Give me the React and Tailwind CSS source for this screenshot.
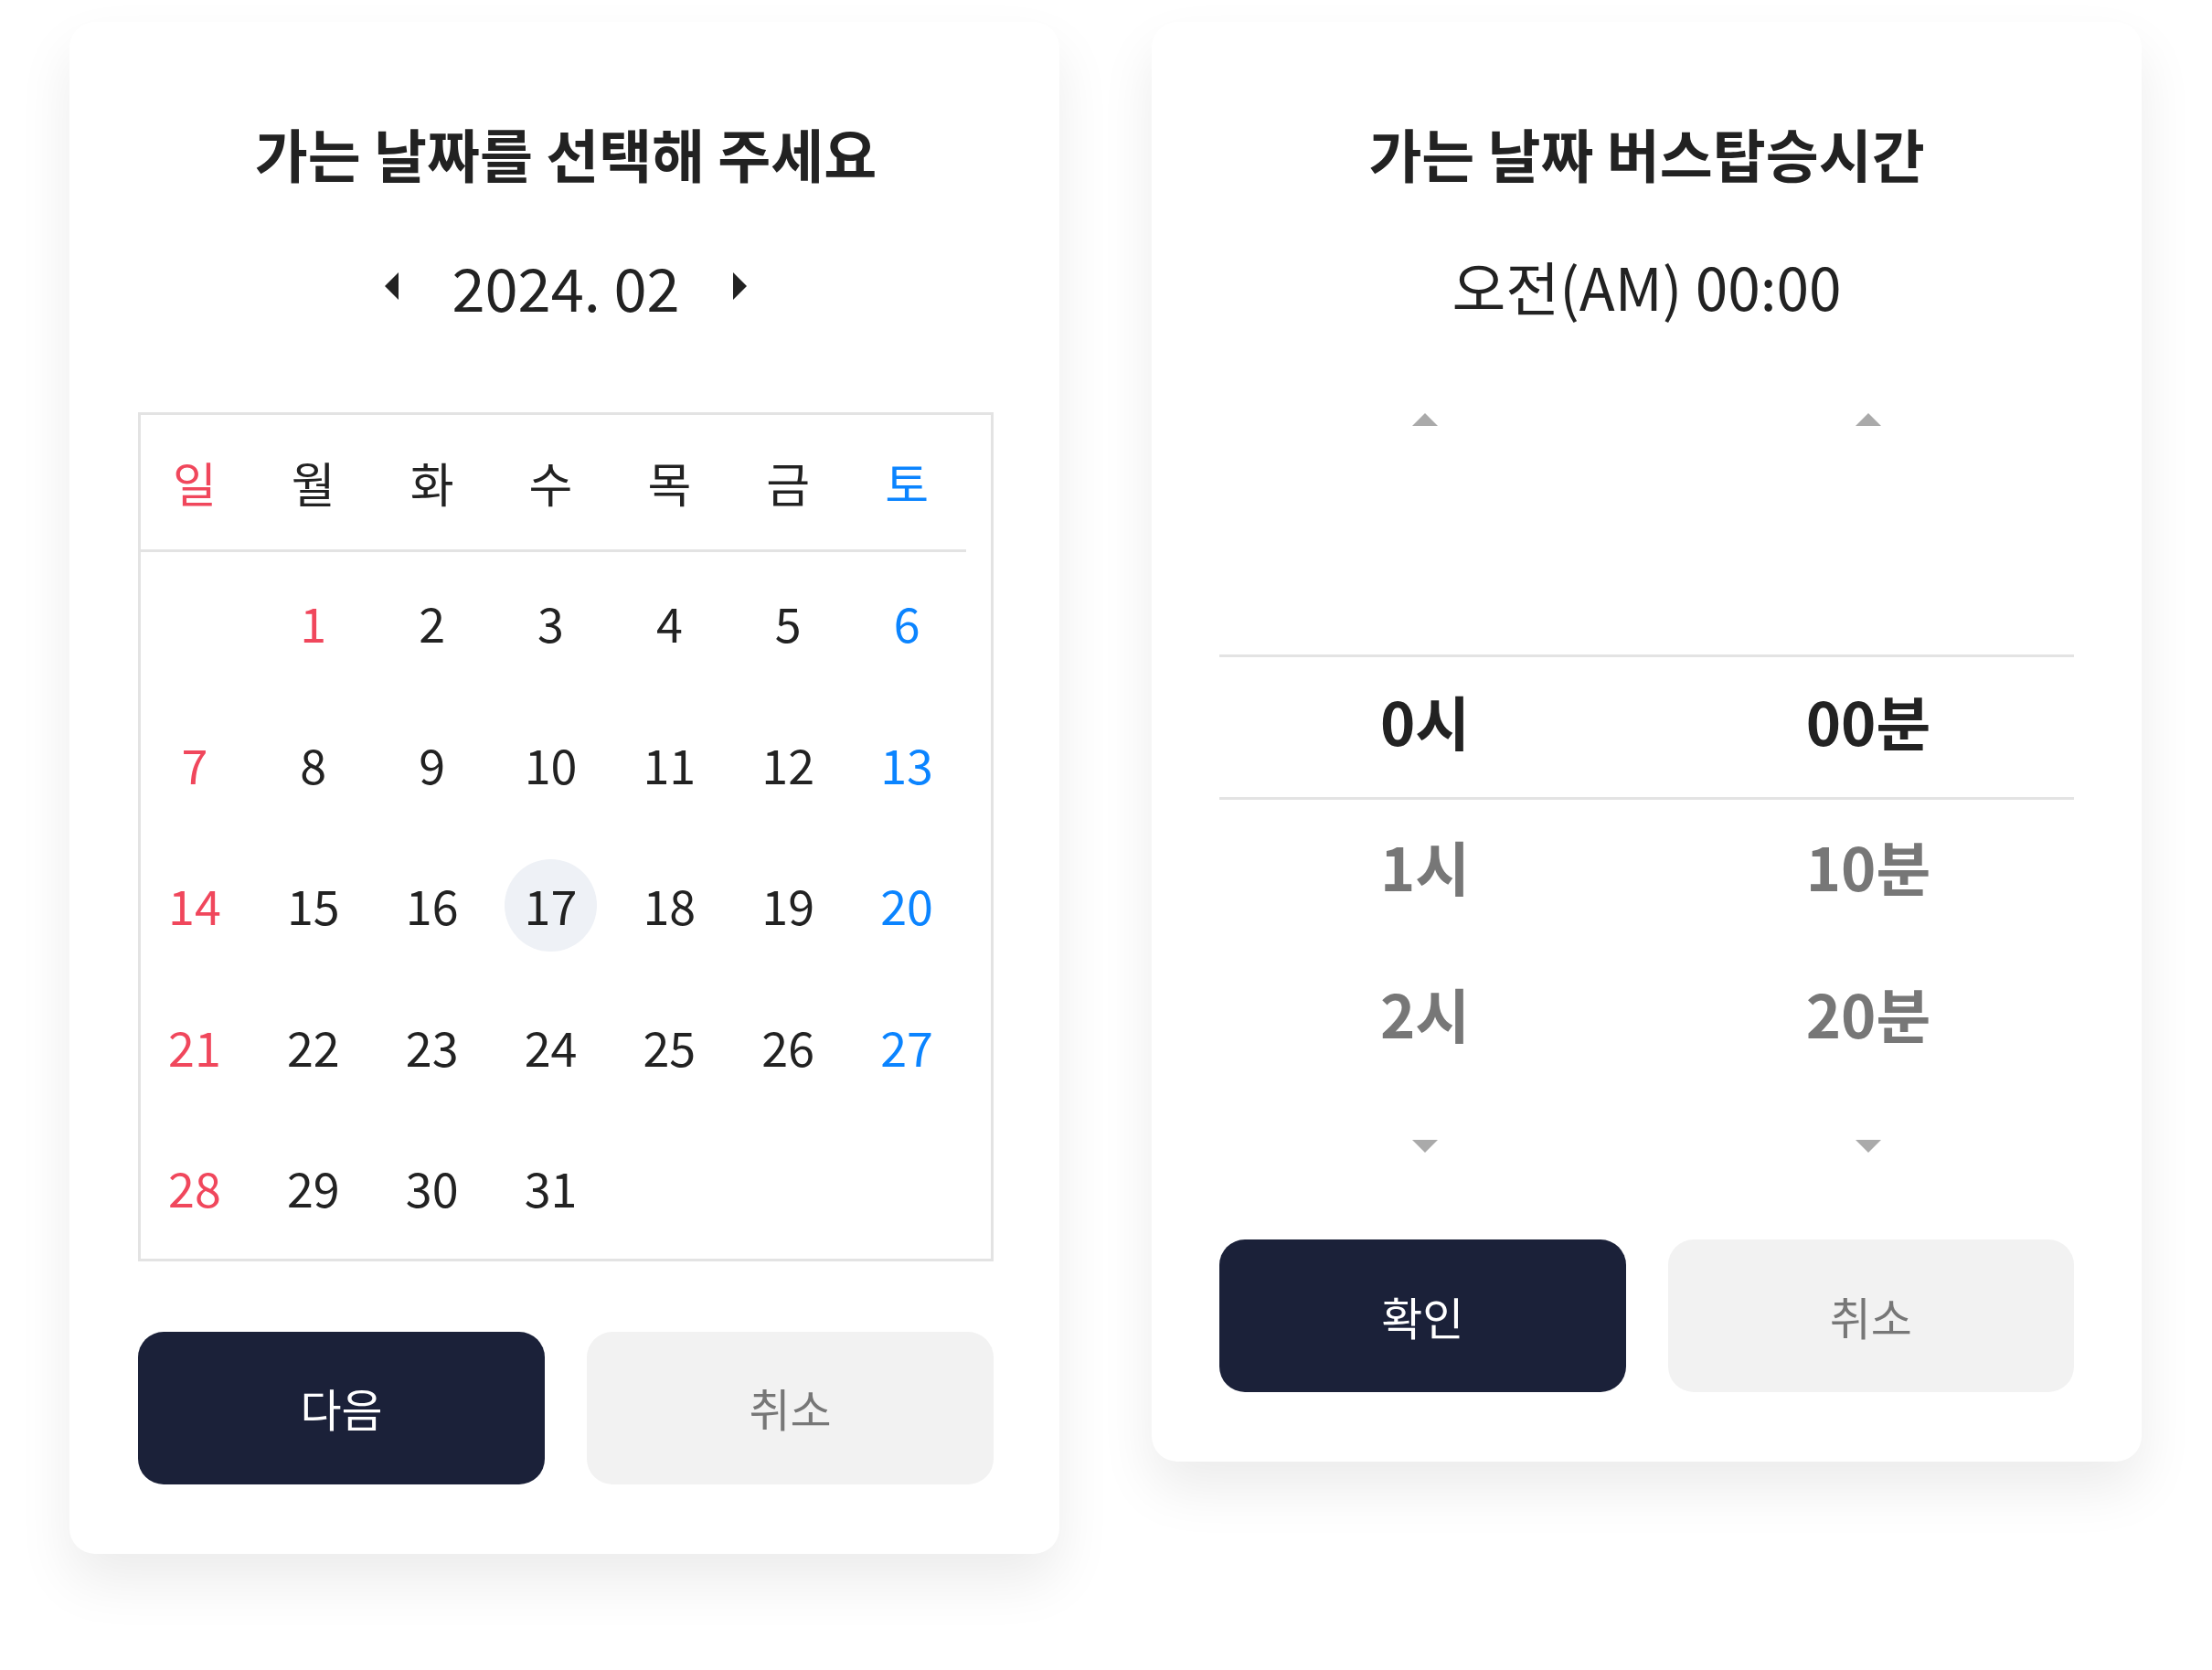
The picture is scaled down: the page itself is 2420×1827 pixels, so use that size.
import React from "react";

const FONT = "font-['Noto_Sans_CJK_KR','Noto_Sans_CJK_SC',sans-serif]";

const WEEKDAYS = ["일", "월", "화", "수", "목", "금", "토"];

const WEEKS = [
  [null, 1, 2, 3, 4, 5, 6],
  [7, 8, 9, 10, 11, 12, 13],
  [14, 15, 16, 17, 18, 19, 20],
  [21, 22, 23, 24, 25, 26, 27],
  [28, 29, 30, 31, null, null, null],
];

const HOLIDAYS = [1];
const SELECTED = 17;

function dayColor(col, day) {
  if (col === 0 || HOLIDAYS.includes(day)) return "text-[#f0475c]";
  if (col === 6) return "text-[#0b84ff]";
  return "text-[#222222]";
}

function Card({ children, className }) {
  return (
    <div
      className={`w-[1083px] shrink-0 rounded-[28px] bg-white pt-[108px] pb-[76px] shadow-[0_30px_60px_rgba(0,0,0,0.08)] ${className}`}
    >
      {children}
    </div>
  );
}

function Title({ children }) {
  return (
    <h2 className="h-[70px] text-center text-[63px] font-bold leading-[70px] text-[#222222]">
      {children}
    </h2>
  );
}

function NavArrow({ dir }) {
  return (
    <svg width="15" height="30" viewBox="0 0 15 30" aria-hidden="true">
      {dir === "left" ? (
        <path d="M15 0 V30 L0 15 Z" fill="#222222" />
      ) : (
        <path d="M0 0 V30 L15 15 Z" fill="#222222" />
      )}
    </svg>
  );
}

function Caret({ up }) {
  return (
    <svg width="28" height="14" viewBox="0 0 28 14" aria-hidden="true">
      {up ? (
        <path d="M14 0 L28 14 H0 Z" fill="#aaaaaa" />
      ) : (
        <path d="M0 0 H28 L14 14 Z" fill="#aaaaaa" />
      )}
    </svg>
  );
}

function Buttons({ primary }) {
  return (
    <div className="grid h-[167px] grid-cols-2 gap-[46px]">
      <button className="flex items-center justify-center rounded-[28px] bg-[#1b2139] text-[49px] text-white">
        {primary}
      </button>
      <button className="flex items-center justify-center rounded-[28px] bg-[#f2f2f2] text-[49px] text-[#777777]">
        취소
      </button>
    </div>
  );
}

function DateCard() {
  return (
    <Card className="pl-[75px] pr-[72px]">
      <Title>가는 날짜를 선택해 주세요</Title>

      <div className="mt-[71px] flex h-[80px] items-center justify-center gap-[58px]">
        <NavArrow dir="left" />
        <span className="text-[65px] leading-none text-[#222222]">2024. 02</span>
        <NavArrow dir="right" />
      </div>

      <div className="mt-[98px] border-[3px] border-[#e3e3e3]">
        <div className="-ml-[6px] grid h-[147px] w-[909px] grid-cols-7 items-center">
          {WEEKDAYS.map((w, i) => (
            <span
              key={w}
              className={`text-center text-[52px] leading-none ${dayColor(i, null)}`}
            >
              {w}
            </span>
          ))}
        </div>
        <div className="h-[3px] w-[903px] bg-[#e3e3e3]" />
        <div className="-ml-[6px] grid w-[909px] grid-cols-7 auto-rows-[154.5px]">
          {WEEKS.flatMap((week, r) =>
            week.map((day, c) => (
              <div key={`${r}-${c}`} className="flex items-center justify-center">
                {day !== null &&
                  (day === SELECTED ? (
                    <span className="flex size-[101px] items-center justify-center rounded-full bg-[#eef1f6] text-[52px] leading-none text-[#222222]">
                      {day}
                    </span>
                  ) : (
                    <span className={`text-[52px] leading-none ${dayColor(c, day)}`}>
                      {day}
                    </span>
                  ))}
              </div>
            ))
          )}
        </div>
      </div>

      <div className="mt-[77px]">
        <Buttons primary="다음" />
      </div>
    </Card>
  );
}

function PickerRow({ hour, minute, active, className }) {
  const tone = active ? "text-[#222222]" : "text-[#777777]";
  return (
    <div className={`flex justify-between ${className}`}>
      <div className={`flex w-[450px] items-center justify-center text-[65px] font-bold leading-none ${tone}`}>
        {hour}
      </div>
      <div className={`flex w-[450px] items-center justify-center text-[65px] font-bold leading-none ${tone}`}>
        {minute}
      </div>
    </div>
  );
}

function CaretRow({ up, className = "" }) {
  return (
    <div className={`flex h-[14px] justify-between ${className}`}>
      <div className="flex w-[450px] justify-center">
        <Caret up={up} />
      </div>
      <div className="flex w-[450px] justify-center">
        <Caret up={up} />
      </div>
    </div>
  );
}

function TimeCard() {
  return (
    <Card className="px-[74px]">
      <Title>가는 날짜 버스탑승시간</Title>

      <div className="mt-[70px] flex h-[80px] items-center justify-center">
        <span className="text-[64px] leading-none text-[#222222]">오전(AM) 00:00</span>
      </div>

      <div className="mt-[100px]">
        <CaretRow up />
        <div className="h-[250px]" />
        <PickerRow
          hour="0시"
          minute="00분"
          active
          className="h-[159px] border-y-[3px] border-[#e3e3e3] pb-[15px]"
        />
        <PickerRow hour="1시" minute="10분" className="h-[160px] pb-[16px]" />
        <PickerRow hour="2시" minute="20분" className="h-[160px] pb-[14px]" />
        <CaretRow className="mt-[52px]" />
      </div>

      <div className="mt-[95px]">
        <Buttons primary="확인" />
      </div>
    </Card>
  );
}

export default function App() {
  return (
    <div className={`min-h-screen bg-white ${FONT}`}>
      <div className="flex items-start gap-[101px] pl-[76px] pt-[24px]">
        <DateCard />
        <TimeCard />
      </div>
    </div>
  );
}
